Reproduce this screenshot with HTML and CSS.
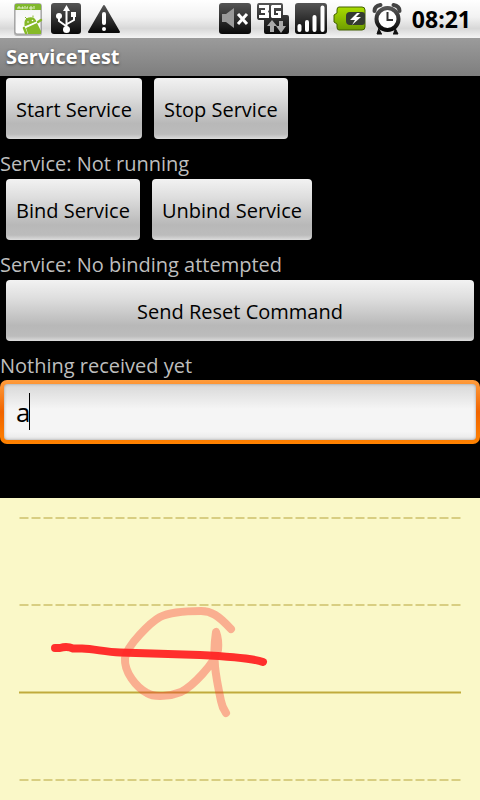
FILE: index.html
```html
<!DOCTYPE html>
<html lang="en">
<head>
<meta charset="utf-8">
<meta name="viewport" content="width=device-width, initial-scale=1">
<title>ServiceTest</title>
<link rel="stylesheet" href="styles.css">
</head>
<body>
<header class="status">
  <svg class="icons-left" width="110" height="34" viewBox="12 2 110 34" aria-hidden="true">
    <defs>
      <linearGradient id="dark" x2="0" y2="1"><stop stop-color="#555"/><stop offset=".5" stop-color="#303030"/><stop offset="1" stop-color="#080808"/></linearGradient>
      <linearGradient id="paper" x2="0" y2="1"><stop stop-color="#f4f4f4"/><stop offset="1" stop-color="#fff"/></linearGradient>
    </defs>
    <rect x="14" y="3" width="28" height="33" rx="3" fill="#777" opacity=".45"/>
    <rect x="15" y="4" width="26" height="30" rx="2" fill="url(#paper)" stroke="#999"/>
    <path d="M15 10V5q0-1 1-1h24q1 0 1 1v5z" fill="#80b82c"/>
    <path d="M18 9V7h2v2M22 9V7h1v2M25 9V6M27 9V7h1M30 9V7h2v2zM34 9V6" stroke="#e5f0cf" fill="none"/>
    <path d="M24.500 25q-1-6 4-7.500 6-1.500 8 4l-12 5z" fill="#86b928"/>
    <path d="M26 28l11-5 4 8v3H28z" fill="#86b928"/>
    <path d="M27 19l-2-2M33 17.500v-2" stroke="#86b928"/>
    <path d="M24 28l2 5M38 22l3-2" stroke="#86b928" stroke-width="2.500" stroke-linecap="round"/>
    <path d="M25 27.500l12-5.500" stroke="#fff"/>
    <circle cx="28" cy="22" r=".8" fill="#fff"/><circle cx="32.500" cy="20.500" r=".8" fill="#fff"/>
    <rect x="51" y="3" width="30" height="31" rx="3" fill="url(#dark)"/>
    <path d="M66.500 9v20M59 17v4l7 5M74 16v4l-7 4" stroke="#fff" stroke-width="2" fill="none"/>
    <path d="M66.500 5l3.500 6h-7zM71 12h5v5h-5z" fill="#fff"/><circle cx="59" cy="16" r="3" fill="#fff"/><circle cx="66.500" cy="29.500" r="3.500" fill="#fff"/>
    <path d="M104 6l15 26H89z" fill="url(#dark)" stroke="url(#dark)" stroke-width="2" stroke-linejoin="round"/>
    <path d="M104 14v9" stroke="#fff" stroke-width="4" stroke-linecap="round"/><circle cx="104" cy="29" r="2" fill="#fff"/>
  </svg>
  <svg class="icons-right" width="186" height="34" viewBox="218 2 186 34" aria-hidden="true">
    <defs>
      <linearGradient id="green" x2="0" y2="1"><stop stop-color="#a9dc00"/><stop offset="1" stop-color="#6d9c00"/></linearGradient>
    </defs>
    <rect x="219" y="3" width="32" height="31" rx="3" fill="url(#dark)"/>
    <path d="M222 14h4l8-6v20l-8-6h-4z" fill="#999"/>
    <path d="M238 14l9 10M247 14l-9 10" stroke="#fff" stroke-width="3"/>
    <path d="M259 3h22q2 0 2 2v10h4q2 0 2 2v15q0 2-2 2h-21q-2 0-2-2V20h-5q-2 0-2-3V6q0-3 2-3z" fill="url(#dark)"/>
    <path d="M259 5h10v5l-1 1.500 1 1.500v5H259v-3h6v-2h-4v-3h4V8h-6zM272 5h9v3h-7v7h4v-2h-2v-2h5v7h-9l-1-1V6z" fill="#fff"/>
    <path d="M272 20l5 6h-3v6h-4v-6h-3zM279 21h4v5h3l-5 7-5-7h3z" fill="#aaa"/>
    <rect x="295" y="3" width="32" height="31" rx="3" fill="url(#dark)"/>
    <path d="M299.500 26v4M307 22v8M314.500 17v13M322.500 7.500v22.500" stroke="#fff" stroke-width="4" stroke-linecap="round"/>
    <path d="M339 7h23q3 0 3 3v17q0 3-3 3h-23q-2 0-2-3v-3l-3-2v-7l3-2v-3q0-3 2-3z" fill="url(#green)" stroke="#426000"/>
    <path d="M350 12h12q3 0 3 3v7q0 3-3 3h-12q-4 0-4-4v-5q0-4 4-4z" fill="#343b31"/>
    <path d="M357 13l-7 7h5l-3 5 9-8h-5l4-4z" fill="#fff"/>
    <path d="M374.500 11q0-5 6-6M399.500 11q0-5-6-6" stroke="#444" stroke-width="4" fill="none" stroke-linecap="round"/>
    <path d="M379 28l-2 6h5M395 28l3 6h-5" stroke="#111" stroke-width="1" fill="#111"/>
    <circle cx="387.500" cy="19" r="11" fill="#fff" stroke="url(#dark)" stroke-width="4"/>
    <path d="M387.500 12v8h5.500" stroke="#333" stroke-width="2" fill="none"/>
  </svg>
  <time class="clock">08:21</time>
</header>
<h1 class="title">ServiceTest</h1>
<main class="content">
  <div class="row"><button class="btn" type="button">Start Service</button><button class="btn" type="button">Stop Service</button></div>
  <p class="label">Service: Not running</p>
  <div class="row"><button class="btn" type="button">Bind Service</button><button class="btn" type="button">Unbind Service</button></div>
  <p class="label">Service: No binding attempted</p>
  <div class="row"><button class="btn wide" type="button">Send Reset Command</button></div>
  <label class="label entry-label" for="entry">Nothing received yet</label>
  <div class="field"><input id="entry" type="text" value="a"><span class="caret"></span></div>
</main>
<section class="pad" aria-label="Handwriting">
  <svg viewBox="0 0 480 302" aria-hidden="true">
    <path d="M19.500 20H461M19.500 107H461M19.500 282H461" stroke="#cdc06a" stroke-width="1.500" stroke-dasharray="9 3"/>
    <path d="M19 194.500H461" stroke="#c0ab3c" stroke-width="2"/>
    <g fill="none" stroke-linecap="round" stroke-linejoin="round" stroke-width="8">
      <path opacity=".35" stroke="#fa2828" d="M231 131C218 117 211 113 201 113C184 113 168 115 160 119C151 124 127 147 125 160C124 174 136 189 147 195C155 200 171 198 181 194C193 188 214 166 218 152Q219 142 216 134C212 161 216 179 221 203Q222 209 226 215"/>
      <path opacity=".95" stroke="#ff2424" d="M55 150H60Q67 148 73 150.500H82C95 151 105 154 120 154.500L200 157C220 158 252 160 263 164"/>
    </g>
  </svg>
</section>
</body>
</html>
```
FILE: styles.css
```css
* { box-sizing: border-box; }
body {
  margin: 0;
  min-height: 100vh;
  display: flex;
  flex-direction: column;
  background: #000;
  color: #bebebe;
  font: 20px/28px "Open Sans", "Noto Sans", sans-serif;
}
.status {
  display: flex;
  align-items: center;
  height: 38px;
  padding: 0 9px 0 12px;
  background: linear-gradient(#fff, #f2f2f2 45%, #d8d8d8 75%, #f4f4f4);
}
.icons-right { margin-left: auto; }
.clock {
  margin-left: 8px;
  color: #000;
  font-size: 23px;
  font-weight: 700;
}
.title {
  margin: 0;
  padding: 5px 6px;
  background: linear-gradient(#9b9b9b, #7e7e7e);
  color: #fff;
  font-size: 20px;
  line-height: 28px;
  text-shadow: 0 1px 3px #444;
}
.content { flex: 1; padding-top: 2px; }
.row { display: flex; gap: 12px; padding: 0 6px; }
.btn {
  height: 61px;
  padding: 2px 10px 0;
  border: 0;
  border-radius: 4px;
  background: linear-gradient(#f2f2f2, #dedede 30%, #b8b8b8 75%, #bcbcbc 92%, #dcdcdc);
  color: #000;
  font: inherit;
}
.wide { flex: 1; }
.label {
  display: block;
  margin: 0;
  padding: 11px 0 1px;
}
.entry-label { padding-bottom: 0; }
.field {
  position: relative;
  height: 64px;
  padding: 4px;
  border-radius: 7px;
  background: linear-gradient(#ff9c3c, #f06400 50%, #ff8200);
}
.field input {
  display: block;
  width: 100%;
  height: 100%;
  padding: 0 12px;
  border: 0;
  border-radius: 4px;
  outline: 0;
  background: linear-gradient(#d8d8d8, #f5f5f5 45%, #f5f5f5 85%, #e8e8e8);
  box-shadow: inset 0 0 3px #999;
  color: #000;
  font: 26px/36px "Open Sans", "Noto Sans", sans-serif;
}
.caret {
  position: absolute;
  left: 29px;
  top: 13px;
  width: 1px;
  height: 37px;
  background: #000;
}
.pad { background: #faf8c8; }
.pad svg { display: block; width: 100%; }
```
